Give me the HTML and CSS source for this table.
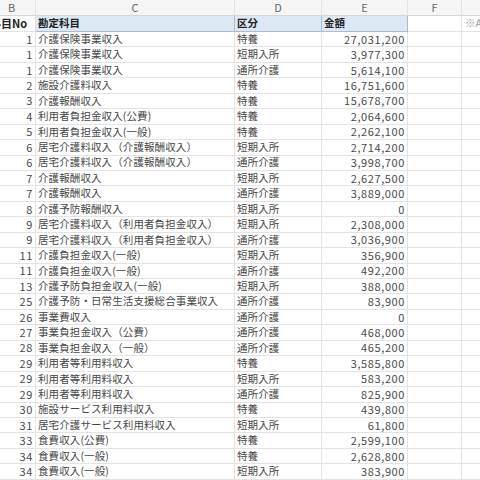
FILE: index.html
```html
<!DOCTYPE html>
<html lang="ja">
<head>
<meta charset="utf-8">
<link rel="stylesheet" href="styles.css">
</head>
<body>
<div class="sheet">
  <div class="colhdr"><span>B</span></div>
  <div class="colhdr"><span>C</span></div>
  <div class="colhdr"><span>D</span></div>
  <div class="colhdr"><span>E</span></div>
  <div class="colhdr"><span>F</span></div>
  <div class="colhdr last"><span></span></div>

  <div class="h2 hb">科目No</div>
  <div class="h2 hc">勘定科目</div>
  <div class="h2 hc">区分</div>
  <div class="h2 hc">金額</div>
  <div class="c"></div>
  <div class="c note">※A</div>

  <div class="c n">1</div><div class="c t">介護保険事業収入</div><div class="c t">特養</div><div class="c n">27,031,200</div><div class="c"></div><div class="c"></div>
  <div class="c n">1</div><div class="c t">介護保険事業収入</div><div class="c t">短期入所</div><div class="c n">3,977,300</div><div class="c"></div><div class="c"></div>
  <div class="c n">1</div><div class="c t">介護保険事業収入</div><div class="c t">通所介護</div><div class="c n">5,614,100</div><div class="c"></div><div class="c"></div>
  <div class="c n">2</div><div class="c t">施設介護料収入</div><div class="c t">特養</div><div class="c n">16,751,600</div><div class="c"></div><div class="c"></div>
  <div class="c n">3</div><div class="c t">介護報酬収入</div><div class="c t">特養</div><div class="c n">15,678,700</div><div class="c"></div><div class="c"></div>
  <div class="c n">4</div><div class="c t">利用者負担金収入(公費)</div><div class="c t">特養</div><div class="c n">2,064,600</div><div class="c"></div><div class="c"></div>
  <div class="c n">5</div><div class="c t">利用者負担金収入(一般)</div><div class="c t">特養</div><div class="c n">2,262,100</div><div class="c"></div><div class="c"></div>
  <div class="c n">6</div><div class="c t">居宅介護料収入（介護報酬収入）</div><div class="c t">短期入所</div><div class="c n">2,714,200</div><div class="c"></div><div class="c"></div>
  <div class="c n">6</div><div class="c t">居宅介護料収入（介護報酬収入）</div><div class="c t">通所介護</div><div class="c n">3,998,700</div><div class="c"></div><div class="c"></div>
  <div class="c n">7</div><div class="c t">介護報酬収入</div><div class="c t">短期入所</div><div class="c n">2,627,500</div><div class="c"></div><div class="c"></div>
  <div class="c n">7</div><div class="c t">介護報酬収入</div><div class="c t">通所介護</div><div class="c n">3,889,000</div><div class="c"></div><div class="c"></div>
  <div class="c n">8</div><div class="c t">介護予防報酬収入</div><div class="c t">短期入所</div><div class="c n">0</div><div class="c"></div><div class="c"></div>
  <div class="c n">9</div><div class="c t">居宅介護料収入（利用者負担金収入）</div><div class="c t">短期入所</div><div class="c n">2,308,000</div><div class="c"></div><div class="c"></div>
  <div class="c n">9</div><div class="c t">居宅介護料収入（利用者負担金収入）</div><div class="c t">通所介護</div><div class="c n">3,036,900</div><div class="c"></div><div class="c"></div>
  <div class="c n">11</div><div class="c t">介護負担金収入(一般)</div><div class="c t">短期入所</div><div class="c n">356,900</div><div class="c"></div><div class="c"></div>
  <div class="c n">11</div><div class="c t">介護負担金収入(一般)</div><div class="c t">通所介護</div><div class="c n">492,200</div><div class="c"></div><div class="c"></div>
  <div class="c n">13</div><div class="c t">介護予防負担金収入(一般)</div><div class="c t">短期入所</div><div class="c n">388,000</div><div class="c"></div><div class="c"></div>
  <div class="c n">25</div><div class="c t">介護予防・日常生活支援総合事業収入</div><div class="c t">通所介護</div><div class="c n">83,900</div><div class="c"></div><div class="c"></div>
  <div class="c n">26</div><div class="c t">事業費収入</div><div class="c t">通所介護</div><div class="c n">0</div><div class="c"></div><div class="c"></div>
  <div class="c n">27</div><div class="c t">事業負担金収入（公費）</div><div class="c t">通所介護</div><div class="c n">468,000</div><div class="c"></div><div class="c"></div>
  <div class="c n">28</div><div class="c t">事業負担金収入（一般）</div><div class="c t">通所介護</div><div class="c n">465,200</div><div class="c"></div><div class="c"></div>
  <div class="c n">29</div><div class="c t">利用者等利用料収入</div><div class="c t">特養</div><div class="c n">3,585,800</div><div class="c"></div><div class="c"></div>
  <div class="c n">29</div><div class="c t">利用者等利用料収入</div><div class="c t">短期入所</div><div class="c n">583,200</div><div class="c"></div><div class="c"></div>
  <div class="c n">29</div><div class="c t">利用者等利用料収入</div><div class="c t">通所介護</div><div class="c n">825,900</div><div class="c"></div><div class="c"></div>
  <div class="c n">30</div><div class="c t">施設サービス利用料収入</div><div class="c t">特養</div><div class="c n">439,800</div><div class="c"></div><div class="c"></div>
  <div class="c n">31</div><div class="c t">居宅介護サービス利用料収入</div><div class="c t">短期入所</div><div class="c n">61,800</div><div class="c"></div><div class="c"></div>
  <div class="c n">33</div><div class="c t">食費収入(公費)</div><div class="c t">特養</div><div class="c n">2,599,100</div><div class="c"></div><div class="c"></div>
  <div class="c n">34</div><div class="c t">食費収入(一般)</div><div class="c t">特養</div><div class="c n">2,628,800</div><div class="c"></div><div class="c"></div>
  <div class="c n">34</div><div class="c t">食費収入(一般)</div><div class="c t">短期入所</div><div class="c n">383,900</div><div class="c"></div><div class="c"></div>
</div>
</body>
</html>
```

FILE: styles.css
```css
html, body {
  margin: 0;
  padding: 0;
  background: #ffffff;
  overflow: hidden;
}

.sheet {
  display: grid;
  grid-template-columns: 48px 199px 87px 86px 54px 80px;
  grid-template-rows: 16px 16px repeat(29, 15.45px);
  margin-left: -12px;
  font-family: "Noto Sans CJK JP", "Noto Sans", sans-serif;
  font-size: 10.5px;
  color: #474747;
}

.sheet > div {
  box-sizing: border-box;
  border-right: 1px solid #e3e3e3;
  border-bottom: 1px solid #e3e3e3;
  overflow: hidden;
  white-space: nowrap;
  display: flex;
  align-items: center;
  line-height: 1;
}

.colhdr {
  background: #f5f5f5;
  color: #666666;
  justify-content: center;
  font-size: 11px;
  border-bottom-color: #d6d6d6 !important;
}

.h2 {
  font-weight: bold;
  color: #222222;
  padding-left: 2px;
}

.hb {
  background: #ffffff;
  font-size: 11px;
}

.hc {
  background: #dde8f4;
  border-right-color: #a9bcd0 !important;
  border-bottom-color: #a9bcd0 !important;
}

.c.n {
  justify-content: flex-end;
  padding-right: 2px;
  color: #4a4a4a;
  font-size: 11px;
  letter-spacing: 0.6px;
}

.c.t {
  padding-left: 2px;
  letter-spacing: 0.1px;
}

.note {
  color: #999999;
  padding-left: 3px;
}
```
